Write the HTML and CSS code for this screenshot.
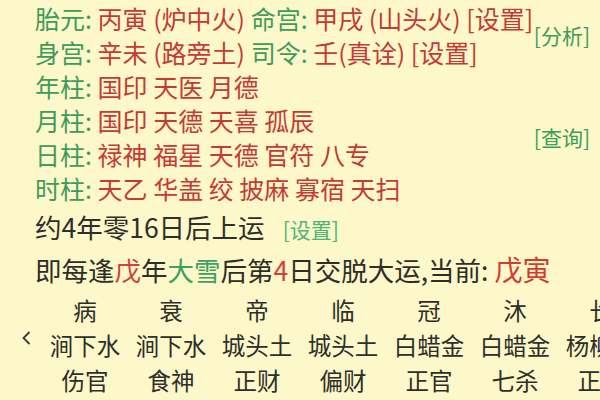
FILE: index.html
```html
<!DOCTYPE html>
<html lang="zh-CN">
<head>
<meta charset="utf-8">
<link rel="stylesheet" href="styles.css">
</head>
<body>
<div class="page">
  <div class="info">
    <div class="group">
      <div class="lines">
        <div class="line"><span class="k">胎元:</span> <span class="v">丙寅 (炉中火)</span> <span class="k">命宫:</span> <span class="v">甲戌 (山头火) [设置]</span></div>
        <div class="line"><span class="k">身宫:</span> <span class="v">辛未 (路旁土)</span> <span class="k">司令:</span> <span class="v">壬(真诠) [设置]</span></div>
      </div>
      <div class="aside">[分析]</div>
    </div>
    <div class="group">
      <div class="lines">
        <div class="line"><span class="k">年柱:</span> <span class="v">国印 天医 月德</span></div>
        <div class="line"><span class="k">月柱:</span> <span class="v">国印 天德 天喜 孤辰</span></div>
        <div class="line"><span class="k">日柱:</span> <span class="v">禄神 福星 天德 官符 八专</span></div>
        <div class="line"><span class="k">时柱:</span> <span class="v">天乙 华盖 绞 披麻 寡宿 天扫</span></div>
      </div>
      <div class="aside">[查询]</div>
    </div>
    <div class="yun first">约4年零16日后上运<span class="set">[设置]</span></div>
    <div class="yun">即每逢<span class="r">戊</span>年<span class="g">大雪</span>后第<span class="r">4</span>日交脱大运,当前: <span class="cur">戊寅</span></div>
  </div>
  <div class="table">
    <svg class="chev" width="9" height="14" viewBox="0 0 9 14"><polyline points="7.5,1 1.5,7 7.5,13" fill="none" stroke="#3a3a36" stroke-width="1.8"/></svg>
    <div class="cell">病</div><div class="cell">衰</div><div class="cell">帝</div><div class="cell">临</div><div class="cell">冠</div><div class="cell">沐</div><div class="cell">长</div>
    <div class="cell">涧下水</div><div class="cell">涧下水</div><div class="cell">城头土</div><div class="cell">城头土</div><div class="cell">白蜡金</div><div class="cell">白蜡金</div><div class="cell">杨柳木</div>
    <div class="cell">伤官</div><div class="cell">食神</div><div class="cell">正财</div><div class="cell">偏财</div><div class="cell">正官</div><div class="cell">七杀</div><div class="cell">正印</div>
  </div>
</div>
</body>
</html>
```

FILE: styles.css
```css
html, body {
  margin: 0;
  padding: 0;
  background: #fcf8c9;
  overflow: hidden;
  width: 600px;
  height: 400px;
}
.page {
  font-family: "Noto Sans CJK SC", "Noto Sans", sans-serif;
  color: #2e2e2a;
  width: 600px;
  height: 400px;
  overflow: hidden;
}
.info {
  padding: 1px 10px 0 35px;
}
.group {
  display: flex;
  align-items: center;
  justify-content: space-between;
}
.line {
  font-size: 25px;
  line-height: 34px;
  height: 34px;
  white-space: nowrap;
}
.k { color: #3f9b5c; }
.v { color: #c63a36; }
.aside {
  font-size: 21px;
  color: #3f9b5c;
  line-height: 30px;
}
.yun {
  font-size: 26.5px;
  line-height: 40px;
  white-space: nowrap;
}
.yun.first { margin-top: 2px; }
.set {
  font-size: 21px;
  color: #4db577;
  margin-left: 18px;
}
.r { color: #d4403a; }
.g { color: #3fa062; }
.cur {
  color: #d63a32;
  font-size: 28px;
}
.table {
  position: relative;
  display: grid;
  grid-template-columns: repeat(7, 86px);
  grid-template-rows: 35px 34.5px 34.5px;
  margin: 3px 0 0 42px;
  font-size: 23.5px;
  line-height: 34.5px;
  color: #2e2e2a;
}
.chev {
  position: absolute;
  left: -20px;
  top: 38px;
}
.cell {
  text-align: center;
  white-space: nowrap;
}
```
